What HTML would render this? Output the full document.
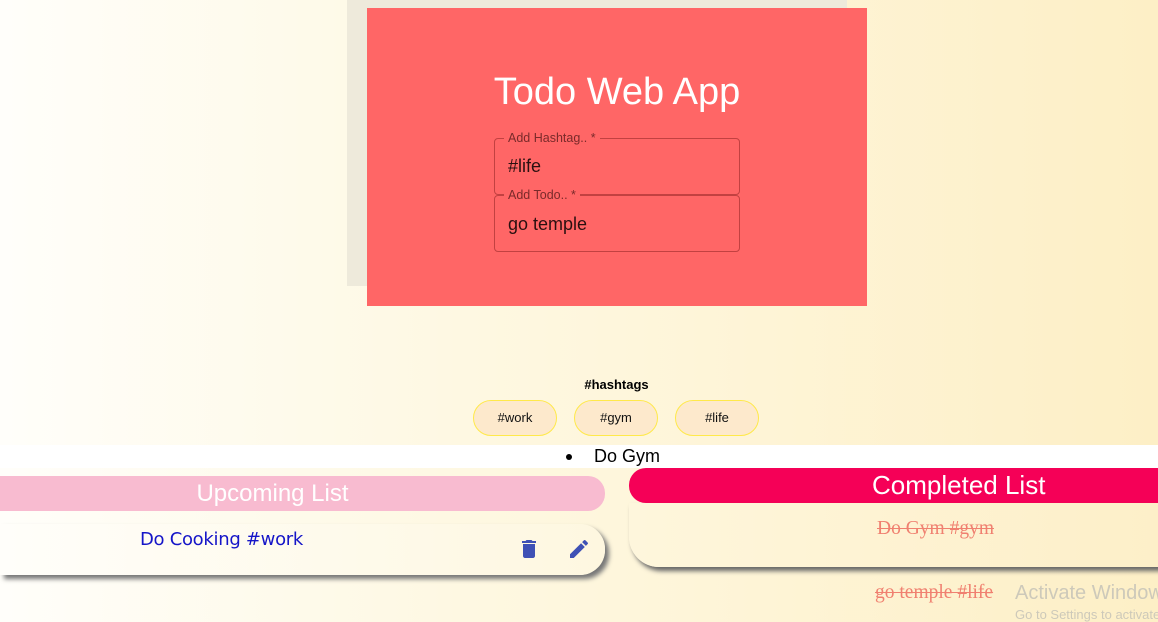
<!DOCTYPE html>
<html><head><meta charset="utf-8"><style>
*{margin:0;padding:0;box-sizing:border-box}
body{width:1158px;height:615px;overflow:hidden;position:relative;background:linear-gradient(90deg,#fffefa 0%,#fef8e2 40%,#fdefc6 100%);font-family:"Liberation Sans",sans-serif}
.a{position:absolute}
.grey{left:347px;top:0;width:500px;height:286px;background:#eeeadb}
.red{left:367px;top:8px;width:500px;height:298px;background:#ff6666}
.title{left:367px;width:500px;top:71px;text-align:center;color:#fff;font-size:38px}
.inp{left:494px;width:246px;height:57px;border:1px solid rgba(120,20,20,.45);border-radius:4px}
.lab{font-size:12.5px;color:#7a2a2a;background:#ff6666;padding:0 4px}
.val{font-size:18px;color:#2a1010}
.chip{top:400px;width:84px;height:36px;background:#fde9cc;border:1px solid #ffe94a;border-radius:18px;font-size:13px;text-align:center;line-height:34px;color:#111}
</style></head><body>
<div class="a grey"></div>
<div class="a red"></div>
<div class="a title">Todo Web App</div>
<div class="a inp" style="top:138px"></div>
<div class="a lab" style="left:504px;top:131px">Add Hashtag.. *</div>
<div class="a val" style="left:508px;top:156px">#life</div>
<div class="a inp" style="top:195px"></div>
<div class="a lab" style="left:504px;top:188px">Add Todo.. *</div>
<div class="a val" style="left:508px;top:214px">go temple</div>
<div class="a" style="left:0;width:1233px;top:377px;text-align:center;font-weight:bold;font-size:13px">#hashtags</div>
<div class="a chip" style="left:473px">#work</div>
<div class="a chip" style="left:574px">#gym</div>
<div class="a chip" style="left:675px">#life</div>
<div class="a" style="left:0;top:445px;width:1158px;height:23px;background:#fff"></div>
<div class="a" style="left:566px;top:454px;width:6px;height:6px;border-radius:50%;background:#000"></div>
<div class="a" style="left:594px;top:446px;font-size:18px">Do Gym</div>
<div class="a" style="left:0;top:476px;width:605px;height:35px;background:#f8bbd0;border-radius:0 17px 17px 0;color:#fff;font-size:24px;line-height:35px;text-align:center;text-indent:-60px">Upcoming List</div>
<div class="a" style="left:0;top:524px;width:605px;height:51px;border-radius:0 25px 25px 0;box-shadow:4px 4px 5px #777;background:linear-gradient(90deg,#fffefa,#fef7e0)"></div>
<div class="a" style="left:140px;top:529px;font-family:'Comic Sans MS','DejaVu Sans',sans-serif;font-size:18px;letter-spacing:-0.3px;color:#1515c8">Do Cooking #work</div>
<svg class="a" style="left:517px;top:537px" width="24" height="24" viewBox="0 0 24 24"><path fill="#3f51b5" d="M6 19c0 1.1.9 2 2 2h8c1.1 0 2-.9 2-2V7H6v12zM19 4h-3.5l-1-1h-5l-1 1H5v2h14V4z"/></svg>
<svg class="a" style="left:567px;top:537px" width="24" height="24" viewBox="0 0 24 24"><path fill="#3f51b5" d="M3 17.25V21h3.75L17.81 9.94l-3.75-3.75L3 17.25zM20.71 7.04a1 1 0 000-1.41l-2.34-2.34a1 1 0 00-1.41 0l-1.83 1.83 3.75 3.75 1.83-1.83z"/></svg>
<div class="a" style="left:629px;top:468px;width:529px;height:35px;background:#f50057;border-radius:17px 0 0 17px;color:#fff;font-size:26px;line-height:35px;padding-left:243px;white-space:nowrap">Completed List</div>
<div class="a" style="left:629px;top:503px;width:540px;height:64px;border-radius:0 0 0 30px;box-shadow:3px 4px 5px #666;background:linear-gradient(90deg,#fef6dc,#fdefc8)"></div>
<div class="a" style="left:877px;top:518px;font-family:'Liberation Serif',serif;font-size:19.5px;color:#f08070;text-decoration:line-through">Do Gym #gym</div>
<div class="a" style="left:875px;top:582px;font-family:'Liberation Serif',serif;font-size:19.5px;color:#f08070;text-decoration:line-through">go temple #life</div>
<div class="a" style="left:1015px;top:582px;font-size:20px;color:#cdc9ba;white-space:nowrap">Activate Windows</div>
<div class="a" style="left:1015px;top:607px;font-size:13px;color:#cdc9ba;white-space:nowrap">Go to Settings to activate</div>
</body></html>
